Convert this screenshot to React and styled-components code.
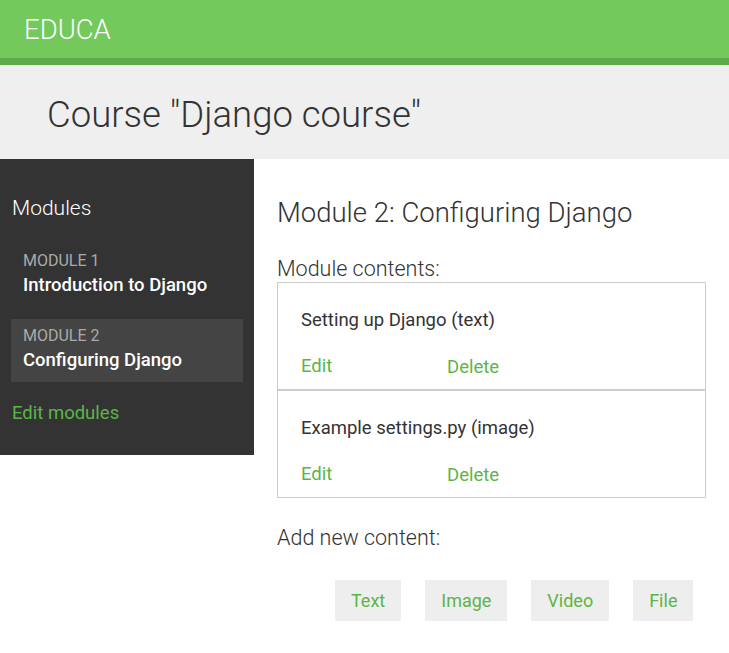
import React from 'react';
import styled, { createGlobalStyle } from 'styled-components';

const GlobalStyle = createGlobalStyle`
  body {
    margin: 0;
    background: #fff;
    font-family: Roboto, "Liberation Sans", sans-serif;
    color: #333;
  }
`;

const Header = styled.header`
  height: 58px;
  background: #74c95c;
  border-bottom: 7px solid #5ea94a;
  display: flex;
  align-items: center;
  padding-left: 24px;
`;

const Logo = styled.div`
  color: #fff;
  font-size: 27.5px;
  font-weight: 300;
  line-height: 32px;
  margin-top: 1px;
`;

const TitleBand = styled.div`
  height: 94px;
  background: #efefef;
  display: flex;
  align-items: center;
  padding-left: 47px;
`;

const PageTitle = styled.h1`
  margin: 6px 0 0;
  font-size: 36.5px;
  font-weight: 300;
  line-height: 42px;
  color: #333;
`;

const Body = styled.div`
  display: flex;
  align-items: flex-start;
`;

const Sidebar = styled.nav`
  width: 254px;
  box-sizing: border-box;
  background: #333;
  padding: 37px 11px 31px;
`;

const SidebarTitle = styled.h3`
  margin: 0 0 24px 1px;
  font-size: 21px;
  font-weight: 300;
  line-height: 24px;
  color: #fff;
`;

const ModuleList = styled.ul`
  list-style: none;
  margin: 0;
  padding: 0;
  display: flex;
  flex-direction: column;
  gap: 12px;
`;

const ModuleItem = styled.li`
  height: 63px;
  box-sizing: border-box;
  padding: 8px 12px 0;
  background: ${(p) => (p.active ? '#444' : 'transparent')};
`;

const ModuleLabel = styled.div`
  font-size: 16px;
  line-height: 18px;
  color: #aaa;
`;

const ModuleName = styled.div`
  margin-top: 4px;
  font-size: 18.5px;
  font-weight: 500;
  line-height: 22px;
  color: #fff;
`;

const EditModules = styled.a`
  display: block;
  margin: 20px 0 0 1px;
  font-size: 18.5px;
  line-height: 22px;
  color: #5cb548;
  text-decoration: none;
`;

const Main = styled.main`
  flex: 1;
  padding: 38px 23px 0;
`;

const ModuleHeading = styled.h2`
  margin: 0 0 28px;
  font-size: 27.5px;
  font-weight: 300;
  line-height: 32px;
  color: #333;
`;

const SubHeading = styled.h3`
  margin: 0 0 1px;
  font-size: 21.5px;
  font-weight: 300;
  line-height: 24px;
  color: #333;
`;

const ContentList = styled.div`
  display: flex;
  flex-direction: column;
`;

const ContentItem = styled.div`
  height: 108px;
  box-sizing: border-box;
  border: 1px solid #ccc;
  padding: 25px 23px 0;
`;

const ContentTitle = styled.div`
  font-size: 18.5px;
  line-height: 24px;
  color: #333;
`;

const Actions = styled.div`
  margin-top: 22px;
  display: grid;
  grid-template-columns: 146px auto;
`;

const ActionLink = styled.a`
  font-size: 18.5px;
  line-height: 24px;
  color: #5cb548;
  text-decoration: none;
  margin-top: ${(p) => (p.low ? '1px' : '0')};
`;

const AddHeading = styled(SubHeading)`
  margin-top: 28px;
`;

const ButtonRow = styled.div`
  display: flex;
  gap: 24px;
  margin-top: 30px;
  padding-left: 58px;
`;

const AddButton = styled.button`
  height: 41px;
  padding: 0 16px;
  border: none;
  background: #eeeeee;
  font-family: Roboto, "Liberation Sans", sans-serif;
  font-size: 18px;
  color: #5cb548;
`;

const modules = [
  { label: 'MODULE 1', name: 'Introduction to Django' },
  { label: 'MODULE 2', name: 'Configuring Django', active: true },
];

const contents = ['Setting up Django (text)', 'Example settings.py (image)'];

const App = () => (
  <>
    <GlobalStyle />
    <Header>
      <Logo>EDUCA</Logo>
    </Header>
    <TitleBand>
      <PageTitle>Course "Django course"</PageTitle>
    </TitleBand>
    <Body>
      <Sidebar>
        <SidebarTitle>Modules</SidebarTitle>
        <ModuleList>
          {modules.map((m) => (
            <ModuleItem key={m.label} active={m.active}>
              <ModuleLabel>{m.label}</ModuleLabel>
              <ModuleName>{m.name}</ModuleName>
            </ModuleItem>
          ))}
        </ModuleList>
        <EditModules href="#">Edit modules</EditModules>
      </Sidebar>
      <Main>
        <ModuleHeading>Module 2: Configuring Django</ModuleHeading>
        <SubHeading>Module contents:</SubHeading>
        <ContentList>
          {contents.map((c) => (
            <ContentItem key={c}>
              <ContentTitle>{c}</ContentTitle>
              <Actions>
                <ActionLink href="#">Edit</ActionLink>
                <ActionLink href="#" low>Delete</ActionLink>
              </Actions>
            </ContentItem>
          ))}
        </ContentList>
        <AddHeading>Add new content:</AddHeading>
        <ButtonRow>
          {['Text', 'Image', 'Video', 'File'].map((b) => (
            <AddButton key={b}>{b}</AddButton>
          ))}
        </ButtonRow>
      </Main>
    </Body>
  </>
);

export default App;
